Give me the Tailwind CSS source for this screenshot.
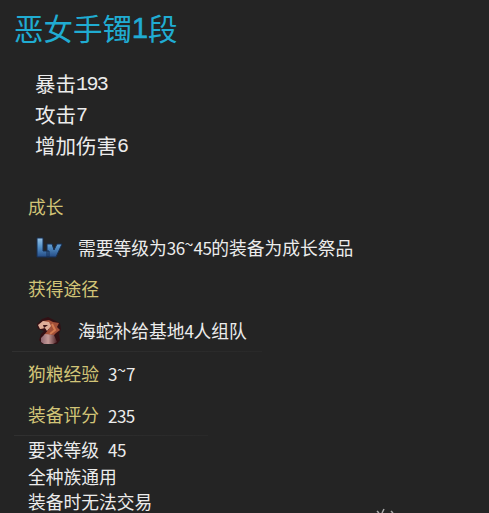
<!DOCTYPE html>
<html lang="zh-CN">
<head>
<meta charset="UTF-8">
<title>恶女手镯1段</title>
<script src="https://cdn.jsdelivr.net/npm/@tailwindcss/browser@4"></script>
</head>
<body class="bg-[#242424]">
<main class="flex flex-col w-[489px] h-[513px] overflow-hidden bg-[#242424] text-[#ececec] whitespace-nowrap font-['Noto_Sans_CJK_SC',sans-serif] text-[17.75px] leading-none">
  <h1 class="h-[55px] shrink-0 pl-[14px] flex items-center text-[29.5px] text-[#20acd2]">恶女手镯<span class="w-[16px] flex justify-center font-['Liberation_Sans',sans-serif] [-webkit-text-stroke:0.5px_#20acd2]">1</span>段</h1>
  <section class="pt-[13px] pl-[35px] text-[20.5px]">
    <p class="h-[31px] flex items-center">暴击<span class="pt-[2px] font-['Liberation_Mono',monospace] text-[20px] tracking-[-1.6px]">193</span></p>
    <p class="h-[31px] flex items-center">攻击<span class="pt-[2px] font-['Liberation_Mono',monospace] text-[20px] tracking-[-1.6px]">7</span></p>
    <p class="h-[31px] flex items-center">增加伤害<span class="pt-[2px] font-['Liberation_Mono',monospace] text-[20px] tracking-[-1.6px]">6</span></p>
  </section>
  <section class="pt-[25px] pl-[28px]">
    <h2 class="h-[41px] flex items-center text-[#d2c477]">成长</h2>
    <div class="h-[41px] flex items-center pl-[7px]">
      <svg class="w-[28px] h-[24px] mr-[15px]" viewBox="0 0 28 24">
        <defs><linearGradient id="lv" x1="0" y1="0" x2="0" y2="1"><stop stop-color="#98c4e6"/><stop offset=".45" stop-color="#5794ca"/><stop offset="1" stop-color="#244b85"/></linearGradient></defs>
        <path d="M2 2h6v13h6v6H2zM12 8h5l2 6 3-6h5l-6 13h-9z" fill="url(#lv)" stroke="#172f52" stroke-width="1"/>
      </svg>
      <p class="flex items-center">需要等级为<span class="text-[17px] tracking-[-0.55px]">36</span><span class="w-[9px] pb-[9px] text-[16px]">~</span><span class="text-[17px] tracking-[-0.55px]">45</span>的装备为成长祭品</p>
    </div>
    <h2 class="h-[42px] flex items-center text-[#d2c477]">获得途径</h2>
    <div class="h-[41px] flex items-center pl-[7px]">
      <svg class="w-[28px] h-[30px] mr-[15px]" viewBox="0 0 28 30">
        <defs><linearGradient id="base" x1="0" x2="1"><stop stop-color="#8c6670"/><stop offset=".45" stop-color="#c69b98"/><stop offset="1" stop-color="#4b2227"/></linearGradient></defs>
        <path d="M2 8L7 3L13 1L19 4L25 7L26 13L24 18L25 24L22 28H7L4 24L6 18L9 15L3 13Z" fill="#321014"/>
        <path d="M4 10L8 5L14 4L18 6L24 7L22 11L25 14L21 17L18 20L9 19L14 13L9 12L6 13Z" fill="#a35039"/>
        <path d="M3 9L8 5L14 6L16 10L12 15L10 12L5 13Z" fill="#dfae99"/>
        <path d="M8 9l5 0-4 3z" fill="#3d1518"/>
        <path d="M17 8l3 6-5 4" fill="none" stroke="#d47b51" stroke-width="2"/>
        <path d="M6 22L10 18L19 19L22 26L18 28H9L6 26Z" fill="url(#base)"/>
      </svg>
      <p class="flex items-center">海蛇补给基地<span class="text-[17px] tracking-[-0.55px]">4</span>人组队</p>
    </div>
  </section>
  <div class="h-px w-[250px] shrink-0 ml-[12px] bg-gradient-to-r from-[#303030] to-[#292929]"></div>
  <section class="pl-[28px]">
    <p class="h-[43px] flex items-center"><span class="text-[#d2c477] w-[80px]">狗粮经验</span><span class="text-[17px] tracking-[-0.55px]">3</span><span class="w-[9px] pb-[9px] text-[16px]">~</span><span class="text-[17px] tracking-[-0.55px]">7</span></p>
    <p class="h-[40px] flex items-center"><span class="text-[#d2c477] w-[80px]">装备评分</span><span class="text-[17px] tracking-[-0.55px]">235</span></p>
  </section>
  <div class="h-px w-[194px] shrink-0 ml-[14px] bg-gradient-to-r from-[#303030] to-[#292929]"></div>
  <section class="pl-[28px]">
    <p class="h-[27px] flex items-center">要求等级<span class="ml-[9px] text-[17px] tracking-[-0.55px]">45</span></p>
    <p class="h-[27px] flex items-center">全种族通用</p>
    <p class="h-[24px] flex items-center">装备时无法交易</p>
  </section>
  <svg class="absolute left-[374px] top-[508px] w-[22px] h-[5px]" viewBox="0 0 22 5"><path d="M3 3l2 2M10 1l-2 4M17 3l2 2" stroke="#aaa" stroke-width="1.5"/></svg>
</main>
</body>
</html>
